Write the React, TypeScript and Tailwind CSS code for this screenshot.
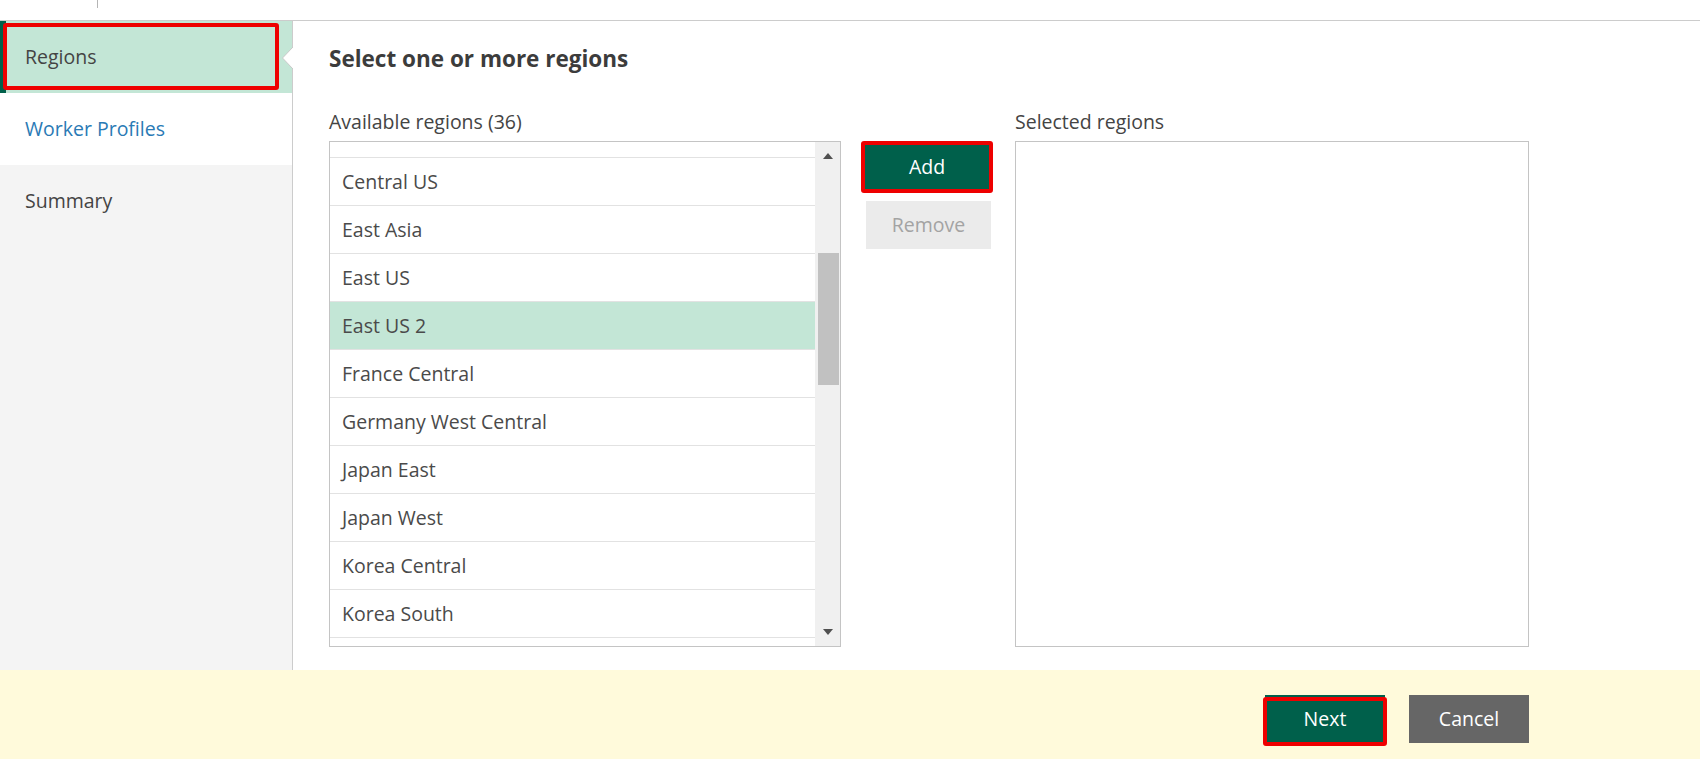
import React from "react";

const regions = [
  "Central US",
  "East Asia",
  "East US",
  "East US 2",
  "France Central",
  "Germany West Central",
  "Japan East",
  "Japan West",
  "Korea Central",
  "Korea South",
];

export default function App() {
  return (
    <div className="w-[1700px] h-[759px] flex flex-col bg-white overflow-hidden font-['Open_Sans',_'Liberation_Sans',_sans-serif] text-[#444444]">
      {/* top bar */}
      <div className="h-[21px] shrink-0 border-b border-[#cccccc] flex pl-[97px]">
        <div className="w-px h-[8px] bg-[#b5b5b5]" />
      </div>

      {/* main */}
      <div className="flex flex-1 min-h-0">
        {/* sidebar */}
        <div className="relative w-[293px] shrink-0 bg-[#f4f4f4] border-r border-[#cccccc] flex flex-col">
          <div className="relative h-[72px] bg-[#c3e6d6] border-l-[6px] border-[#00604b] flex items-center pl-[19px] text-[19.5px] text-[#444444]">
            Regions
            <div className="absolute left-[-3px] top-[2px] w-[276px] h-[67px] border-[4px] border-[#ee0000] rounded-[3px]" />
          </div>
          <div className="h-[72px] bg-white flex items-center pl-[25px] text-[19.5px] text-[#2a7ab5]">
            Worker Profiles
          </div>
          <div className="h-[72px] flex items-center pl-[25px] text-[19.5px] text-[#444444]">
            Summary
          </div>
          <svg
            className="absolute left-[282px] top-[26px]"
            width="11"
            height="22"
            viewBox="0 0 11 22"
          >
            <polygon points="11,0 0.5,11 11,22" fill="#ffffff" />
            <polyline points="11,0 0.5,11 11,22" fill="none" stroke="#c8c8c8" strokeWidth="1" />
          </svg>
        </div>

        {/* content */}
        <div className="flex-1 pl-[36px] pt-[24px]">
          <h1 className="text-[22.5px] leading-[28px] font-bold text-[#3c3c3c]">Select one or more regions</h1>
          <div className="flex mt-[35px]">
            {/* available */}
            <div className="w-[512px] flex flex-col">
              <div className="h-[28px] leading-[28px] text-[19.5px] text-[#444444] mb-[5px]">Available regions (36)</div>
              <div className="h-[506px] border border-[#c4c4c4] flex">
                <div className="flex-1 flex flex-col overflow-hidden">
                  <div className="h-[16px] shrink-0 border-b border-[#e2e2e2]" />
                  {regions.map((r) => (
                    <div
                      key={r}
                      className={
                        r === "East US 2"
                          ? "h-[48px] shrink-0 border-b border-[#e2e2e2] bg-[#c3e6d6] flex items-center pl-[12px] text-[19.5px] text-[#4a4a4a]"
                          : "h-[48px] shrink-0 border-b border-[#e2e2e2] flex items-center pl-[12px] text-[19.5px] text-[#4a4a4a]"
                      }
                    >
                      {r}
                    </div>
                  ))}
                  <div className="h-[48px] shrink-0" />
                </div>
                <div className="w-[25px] shrink-0 bg-[#f0f0f0] flex flex-col">
                  <div className="h-[28px] flex items-center justify-center">
                    <svg width="10" height="6" viewBox="0 0 10 6">
                      <polygon points="0,6 5,0 10,6" fill="#505050" />
                    </svg>
                  </div>
                  <div className="mt-[83px] ml-[3px] w-[21px] h-[132px] bg-[#c1c1c1]" />
                  <div className="flex-1" />
                  <div className="h-[28px] flex items-center justify-center">
                    <svg width="10" height="6" viewBox="0 0 10 6">
                      <polygon points="0,0 10,0 5,6" fill="#505050" />
                    </svg>
                  </div>
                </div>
              </div>
            </div>

            {/* buttons */}
            <div className="w-[125px] ml-[25px] mt-[33px] flex flex-col items-start">
              <div className="w-[132px] h-[52px] -ml-[5px] shrink-0 border-[4px] border-[#ee0000] rounded-[3px] bg-[#00604b] flex items-center justify-center text-[19.5px] text-white">
                Add
              </div>
              <div className="w-[125px] h-[48px] mt-[8px] bg-[#ebebeb] flex items-center justify-center text-[19.5px] text-[#a3a3a3]">
                Remove
              </div>
            </div>

            {/* selected */}
            <div className="w-[514px] ml-[24px] flex flex-col">
              <div className="h-[28px] leading-[28px] text-[19.5px] text-[#444444] mb-[5px]">Selected regions</div>
              <div className="h-[506px] border border-[#c4c4c4] bg-white" />
            </div>
          </div>
        </div>
      </div>

      {/* footer */}
      <div className="h-[89px] shrink-0 bg-[#fffadb] flex justify-end items-start pt-[25px] pr-[171px] gap-[24px]">
        <div className="relative w-[120px] h-[48px] bg-[#00604b] flex items-center justify-center text-[19.5px] text-white">
          Next
          <div className="absolute left-[-2px] right-[-2px] top-[2px] bottom-[-3px] border-[4px] border-[#ee0000] rounded-[3px]" />
        </div>
        <div className="w-[120px] h-[48px] bg-[#666666] flex items-center justify-center text-[19.5px] text-white">
          Cancel
        </div>
      </div>
    </div>
  );
}
